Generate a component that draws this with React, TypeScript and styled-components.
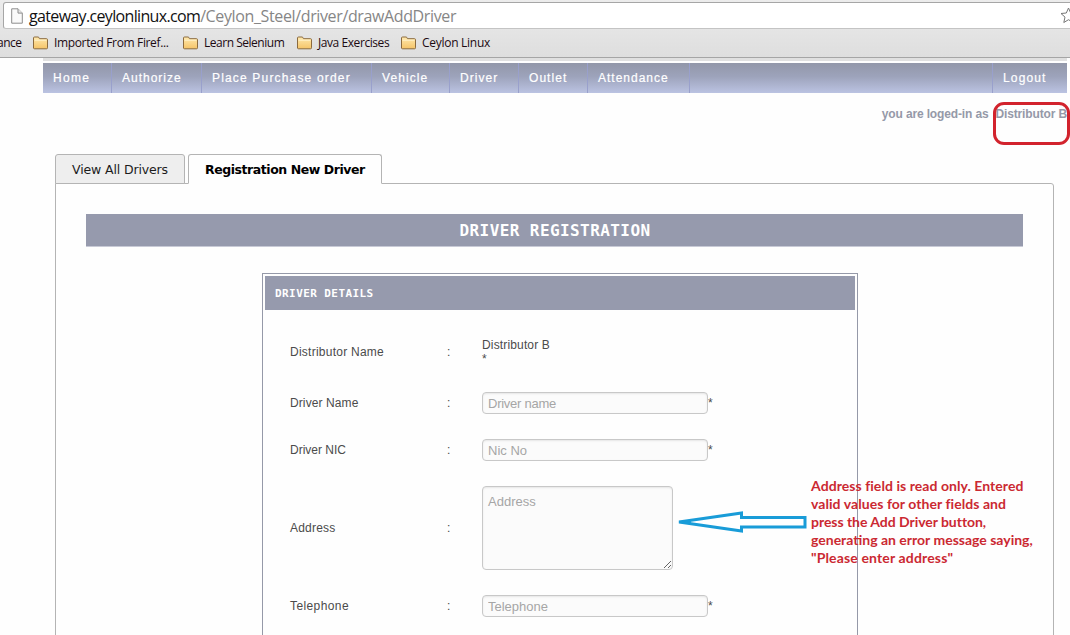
import React from "react";
import styled, { createGlobalStyle } from "styled-components";

const GlobalStyle = createGlobalStyle`
  * { box-sizing: border-box; }
  body {
    margin: 0;
    background: #fff;
    overflow: hidden;
    font-family: "Liberation Sans", Arial, sans-serif;
  }
`;

const Page = styled.div`
  position: relative;
  width: 1070px;
  height: 635px;
  overflow: hidden;
  background: #fefefe;
`;

const Chrome = styled.header`
  height: 58px;
  padding-top: 2px;
  background: linear-gradient(#ececec, #dedede);
  border-bottom: 1px solid #a5a5a5;
`;

const AddressBar = styled.div`
  display: flex;
  align-items: center;
  height: 27px;
  width: 1100px;
  margin-left: 3px;
  padding-left: 7px;
  background: #fff;
  border: 1px solid #a6a6a6;
  border-bottom-color: #c4c4c4;
  border-radius: 3px;
`;

const Url = styled.span`
  flex: none;
  width: 1031px;
  margin-left: 6px;
  font: 16px/24px "Open Sans", sans-serif;
  letter-spacing: -0.37px;
  color: #868686;
  white-space: nowrap;
  b { font-weight: 400; color: #111; letter-spacing: -0.66px; }
`;

const Bookmarks = styled.nav`
  display: flex;
  align-items: center;
  height: 28px;
  font: 12px/16px "Open Sans", sans-serif;
  color: #1c0a12;
  white-space: nowrap;
`;

const Bookmark = styled.div<{ $width: number; $tracking: number }>`
  display: flex;
  flex: none;
  align-items: center;
  gap: 6px;
  width: ${(p) => p.$width}px;
  letter-spacing: ${(p) => p.$tracking}px;
`;

const CutBookmark = styled.div`
  flex: none;
  width: 36px;
  margin-left: -3px;
  letter-spacing: -0.5px;
`;

const Site = styled.main`
  display: flex;
  flex-direction: column;
  width: 1024px;
  margin-left: 43px;
`;

const TopStrip = styled.div`
  height: 3px;
  margin-bottom: 2px;
  background: #e0e0e0;
`;

const Menu = styled.nav`
  display: flex;
  height: 30px;
  background: linear-gradient(#9297a9, #9da3bb 45%, #bbc3e2);
`;

const MenuItem = styled.a<{ $width: number; $tracking?: number; $last?: boolean }>`
  width: ${(p) => p.$width}px;
  padding-left: 10px;
  border: 0 solid #99a0cc;
  border-right-width: ${(p) => (p.$last ? 0 : 1)}px;
  border-left-width: ${(p) => (p.$last ? 1 : 0)}px;
  margin-left: ${(p) => (p.$last ? "auto" : "0")};
  font-size: 12px;
  line-height: 31px;
  -webkit-text-stroke: 0.2px #fff;
  letter-spacing: ${(p) => p.$tracking ?? 1.15}px;
  color: #fff;
  white-space: nowrap;
`;

const LoginInfo = styled.div`
  display: flex;
  justify-content: flex-end;
  gap: 7px;
  height: 61px;
  padding-top: 13px;
  font-size: 12px;
  line-height: 16px;
  font-weight: 700;
  letter-spacing: -0.14px;
  color: #9599a8;
  white-space: nowrap;
`;

const Tabs = styled.div`
  position: relative;
  z-index: 1;
  display: flex;
  gap: 3px;
  height: 30px;
  margin: 0 0 -1px 12px;
`;

const Tab = styled.div<{ $width: number; $active?: boolean }>`
  width: ${(p) => p.$width}px;
  padding-left: 16px;
  border: 1px solid #b4b4b4;
  border-bottom-color: ${(p) => (p.$active ? "#fefefe" : "#b4b4b4")};
  border-radius: 3px 3px 0 0;
  background: ${(p) => (p.$active ? "#fefefe" : "#eee")};
  font: ${(p) => (p.$active ? 700 : 400)} 12.5px/29px "DejaVu Sans", Verdana, sans-serif;
  letter-spacing: ${(p) => (p.$active ? -0.44 : -0.13)}px;
  color: ${(p) => (p.$active ? "#000" : "#1c1c1c")};
  white-space: nowrap;
`;

const Panel = styled.section`
  width: 999px;
  height: 500px;
  margin-left: 12px;
  padding: 30px;
  border: 1px solid #b4b4b4;
  border-radius: 0 3px 0 0;
`;

const Banner = styled.h1`
  height: 33px;
  margin: 0 0 26px;
  padding-left: 1px;
  border-bottom: 1px solid #c8cad6;
  background: #969aad;
  color: #fff;
  font: 700 16px/33px "DejaVu Sans Mono", monospace;
  letter-spacing: 0.42px;
  text-align: center;
`;

const DetailsBox = styled.div`
  width: 596px;
  height: 420px;
  margin-left: 176px;
  padding: 2px;
  border: 1px solid #9599a8;
`;

const DetailsHeading = styled.h2`
  height: 34px;
  margin: 0 0 28px;
  padding-left: 10px;
  background: #969aad;
  color: #fff;
  font: 700 11px/35px "DejaVu Sans Mono", monospace;
  letter-spacing: 0.42px;
`;

const Form = styled.form`
  display: grid;
  grid-template-columns: 157px 35px 1fr;
  row-gap: 25px;
  align-items: center;
  padding-left: 25px;
  font-size: 12px;
  line-height: 14px;
  color: #4b4b4b;
`;

const Label = styled.label<{ $tracking?: number }>`
  letter-spacing: ${(p) => p.$tracking ?? 0.2}px;
`;

const Value = styled.div`
  display: flex;
  align-items: center;
`;

const FirstRowCell = styled.div`
  height: 16px;
  letter-spacing: 0.25px;
`;

const Stacked = styled.div`
  height: 29px;
  letter-spacing: 0.15px;
`;

const Input = styled.input<{ $tracking: number }>`
  width: 226px;
  height: 22px;
  padding: 1px 5px 0;
  border: 1px solid #c8c8c8;
  border-radius: 4px;
  background: #fbfbfb;
  box-shadow: inset 0 1px 2px #e6e6e6;
  font: 13px "Liberation Sans", Arial, sans-serif;
  letter-spacing: ${(p) => p.$tracking}px;
  &::placeholder { color: #a6a6a6; }
`;

const Address = styled.textarea`
  display: block;
  width: 191px;
  height: 84px;
  padding: 7px 5px;
  border: 1px solid #c8c8c8;
  border-radius: 4px;
  background: #fbfbfb;
  box-shadow: inset 0 1px 2px #e6e6e6;
  font: 13px/15px "Liberation Sans", Arial, sans-serif;
  &::placeholder { color: #a6a6a6; }
`;

const UserHighlight = styled.div`
  position: absolute;
  left: 993px;
  top: 102px;
  width: 77px;
  height: 43px;
  border: 3px solid #d2232d;
  border-radius: 11px;
`;

const Arrow = styled.svg`
  position: absolute;
  left: 676px;
  top: 508px;
`;

const Note = styled.p`
  position: absolute;
  left: 811px;
  top: 477px;
  margin: 0;
  font: 700 14px/18px Lato, sans-serif;
  color: #cb2932;
  white-space: nowrap;
`;

const NoteLine = styled.span<{ $tracking: number }>`
  display: block;
  letter-spacing: ${(p) => p.$tracking}px;
`;

const FolderIcon = () => (
  <svg width="15" height="14" viewBox="0 0 15 14">
    <defs>
      <linearGradient id="folder" x2="0" y2="1">
        <stop stopColor="#ffe9ae" />
        <stop offset="1" stopColor="#f5c468" />
      </linearGradient>
    </defs>
    <path d="M.5 12V2Q.5 1 1.500 1H5q1 0 1 1l.5.700H13.500q1 0 1 1V11.800q0 1-1 1h-12q-1 0-1-1Z" fill="url(#folder)" stroke="#8b6b3f" />
    <path d="M1.500 4.200h12" stroke="#fff2cc" />
  </svg>
);

const FileIcon = () => (
  <svg width="12" height="16" viewBox="0 0 12 16">
    <path d="M.7.800h6.300l4.300 4.300v10.100H.7Z" fill="#fafafa" stroke="#8d8d8d" />
    <path d="M7 .800v4.300h4.300" fill="#e8e8e8" stroke="#8d8d8d" />
  </svg>
);

const StarIcon = () => (
  <svg width="17" height="17" viewBox="0 0 17 17">
    <path d="M8.500 1l2.200 5 5.300.5-4 3.600 1.200 5.400-4.700-2.800-4.700 2.800L5 10.100 1 6.500 6.300 6Z" fill="#fff" stroke="#777" />
  </svg>
);

const folders = [
  { name: "Imported From Firef...", width: 150, tracking: -0.35 },
  { name: "Learn Selenium", width: 114, tracking: -0.48 },
  { name: "Java Exercises", width: 104, tracking: -0.43 },
  { name: "Ceylon Linux", width: 100, tracking: -0.28 },
];

const menu = [
  { name: "Home", width: 69, tracking: 1.3 },
  { name: "Authorize", width: 90, tracking: 1 },
  { name: "Place Purchase order", width: 170, tracking: 1.17 },
  { name: "Vehicle", width: 78, tracking: 1.1 },
  { name: "Driver", width: 69, tracking: 1.05 },
  { name: "Outlet", width: 69, tracking: 1.05 },
  { name: "Attendance", width: 102, tracking: 1 },
];

const note = [
  { text: "Address field is read only. Entered", tracking: 0.06 },
  { text: "valid values for other fields and", tracking: 0.06 },
  { text: "press the Add Driver button,", tracking: -0.04 },
  { text: "generating an error message saying,", tracking: 0 },
  { text: "\"Please enter address\"", tracking: 0.15 },
];

interface TextRowProps {
  label: string;
  placeholder: string;
  labelTracking: number;
  tracking: number;
}

const TextRow = ({ label, placeholder, labelTracking, tracking }: TextRowProps) => (
  <>
    <Label $tracking={labelTracking}>{label}</Label>
    <span>:</span>
    <Value>
      <Input placeholder={placeholder} $tracking={tracking} />
      <span>*</span>
    </Value>
  </>
);

export default function App() {
  return (
    <Page>
      <GlobalStyle />
      <Chrome>
        <AddressBar>
          <FileIcon />
          <Url><b>gateway.ceylonlinux.com</b>/Ceylon_Steel/driver/drawAddDriver</Url>
          <StarIcon />
        </AddressBar>
        <Bookmarks>
          <CutBookmark>ance</CutBookmark>
          {folders.map((f) => (
            <Bookmark key={f.name} $width={f.width} $tracking={f.tracking}>
              <FolderIcon />
              {f.name}
            </Bookmark>
          ))}
        </Bookmarks>
      </Chrome>
      <Site>
        <TopStrip />
        <Menu>
          {menu.map((m) => (
            <MenuItem key={m.name} $width={m.width} $tracking={m.tracking}>{m.name}</MenuItem>
          ))}
          <MenuItem $width={75} $last>Logout</MenuItem>
        </Menu>
        <LoginInfo>
          <span>you are loged-in as</span>
          <span>Distributor B</span>
        </LoginInfo>
        <Tabs>
          <Tab $width={130}>View All Drivers</Tab>
          <Tab $width={194} $active>Registration New Driver</Tab>
        </Tabs>
        <Panel>
          <Banner>DRIVER REGISTRATION</Banner>
          <DetailsBox>
            <DetailsHeading>DRIVER DETAILS</DetailsHeading>
            <Form>
              <FirstRowCell>Distributor Name</FirstRowCell>
              <FirstRowCell>:</FirstRowCell>
              <Stacked>
                <div>Distributor B</div>
                <div>*</div>
              </Stacked>
              <TextRow label="Driver Name" placeholder="Driver name" labelTracking={0.1} tracking={-0.25} />
              <TextRow label="Driver NIC" placeholder="Nic No" labelTracking={0} tracking={0} />
              <Label>Address</Label>
              <span>:</span>
              <Address placeholder="Address" readOnly />
              <TextRow label="Telephone" placeholder="Telephone" labelTracking={0.4} tracking={0} />
            </Form>
          </DetailsBox>
        </Panel>
      </Site>
      <UserHighlight />
      <Arrow width="132" height="28" viewBox="0 0 132 28">
        <path d="M3 14 65.500 5v4.500h63.500v9.500H65.500v4Z" fill="#fff" stroke="#199cd8" strokeWidth="3" />
        <path d="M3 14 15 12v4Z" fill="#199cd8" />
      </Arrow>
      <Note>
        {note.map((n) => (
          <NoteLine key={n.text} $tracking={n.tracking}>{n.text}</NoteLine>
        ))}
      </Note>
    </Page>
  );
}
